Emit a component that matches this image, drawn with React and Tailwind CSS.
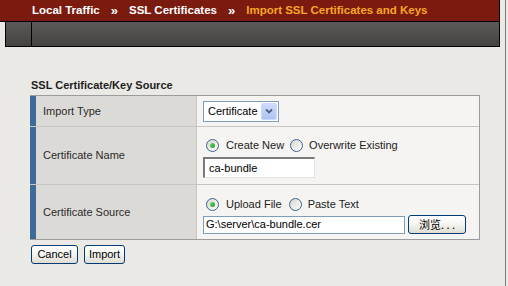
import React from 'react';

const Radio = ({ checked }) => (
  <span className="relative inline-flex h-[13px] w-[13px] shrink-0 items-center justify-center rounded-full border border-[#3d6590] bg-gradient-to-br from-[#d6d6cf] to-white">
    {checked && (
      <span className="h-[5px] w-[5px] rounded-full bg-gradient-to-br from-[#6fd36f] to-[#1f9a1f]" />
    )}
  </span>
);

const XpButton = ({ children, className = '' }) => (
  <button
    className={`flex h-[19px] items-center justify-center rounded-[3px] border border-[#003c74] bg-gradient-to-b from-white via-[#f4f4f0] to-[#dedcd3] text-[11px] leading-none text-black ${className}`}
  >
    {children}
  </button>
);

const rows = [
  { label: 'Import Type', h: 'h-[31px] border-b' },
  { label: 'Certificate Name', h: 'h-[58px] border-b' },
  { label: 'Certificate Source', h: 'h-[54px]' },
];

function TypeSelect() {
  return (
    <div className="flex h-[21px] w-[76px] items-center justify-between border border-[#7f9db9] bg-white pl-[4px] pr-px">
      <span className="text-[11px] text-black">Certificate</span>
      <span className="flex h-[17px] w-[16px] items-center justify-center rounded-[2px] border border-[#c9d8fc] bg-gradient-to-b from-[#cfdcfd] to-[#aec3f3]">
        <svg width="8" height="6" viewBox="0 0 8 6">
          <path d="M1 1.5 L4 4.5 L7 1.5" fill="none" stroke="#4d6185" strokeWidth="1.8" />
        </svg>
      </span>
    </div>
  );
}

function ValueCell({ index }) {
  if (index === 0) {
    return (
      <div className="flex h-full items-center pl-[6px]">
        <TypeSelect />
      </div>
    );
  }
  if (index === 1) {
    return (
      <div className="flex h-full flex-col pl-[6px] pt-[11px]">
        <div className="flex h-[14px] items-center text-[11px] text-[#222]">
          <span className="ml-[3px] flex items-center gap-[7px]">
            <Radio checked />
            Create New
          </span>
          <span className="ml-[6px] flex items-center gap-[6px]">
            <Radio />
            Overwrite Existing
          </span>
        </div>
        <div className="mt-[5px] flex h-[21px] w-[112px] items-center border-t-2 border-l-2 border-r border-b border-t-[#7a7a7a] border-l-[#7a7a7a] border-r-[#e2e2e2] border-b-[#e2e2e2] bg-white pl-[4px] text-[11px] text-black">
          ca-bundle
        </div>
      </div>
    );
  }
  return (
    <div className="flex h-full flex-col pl-[6px] pt-[12px]">
      <div className="flex h-[14px] items-center text-[11px] text-[#222]">
        <span className="ml-[3px] flex items-center gap-[7px]">
          <Radio checked />
          Upload File
        </span>
        <span className="ml-[7px] flex items-center gap-[6px]">
          <Radio />
          Paste Text
        </span>
      </div>
      <div className="mt-[4px] flex items-center gap-[3px]">
        <div className="flex h-[18px] w-[202px] items-center border border-[#7f9db9] bg-white pl-[2px] text-[11px] text-black">
          G:\server\ca-bundle.cer
        </div>
        <XpButton className="h-[18px] w-[58px] font-['Noto_Sans_CJK_SC',sans-serif] text-[#666]">
          浏览. . .
        </XpButton>
      </div>
    </div>
  );
}

export default function App() {
  return (
    <div className="flex h-[286px] w-[508px] overflow-hidden bg-[#ebe9e5] font-['Liberation_Sans',Arial,sans-serif]">
      <div className="flex w-[505px] shrink-0 flex-col">
        <div className="flex h-[22px] w-[500px] items-center gap-[11px] border-r border-b border-black bg-[#7b1b10] pl-[32px] text-[11.5px] font-bold leading-none">
          <span className="text-white">Local Traffic</span>
          <span className="text-[13px] text-white">»</span>
          <span className="text-white">SSL Certificates</span>
          <span className="text-[13px] text-white">»</span>
          <span className="text-[#f6a623]">Import SSL Certificates and Keys</span>
        </div>
        <div className="ml-[5px] flex h-[25px] w-[495px] border-x border-b border-black bg-gradient-to-b from-[#5c5a57] to-[#454341]">
          <div className="h-full w-[26px] border-r border-black" />
        </div>

        <div className="pl-[30px]">
          <div className="mt-[31px] pl-px text-[11px] font-bold leading-[14px] text-[#1e1e1e]">
            SSL Certificate/Key Source
          </div>
          <div className="mt-[3px] w-[450px] border-t border-r border-b border-[#9b9b9b]">
            {rows.map((r, i) => (
              <div key={r.label} className={`flex border-[#c6c4c0] ${r.h}`}>
                <div className="w-[6px] shrink-0 bg-[#3c6a9b]" />
                <div className="flex w-[161px] shrink-0 items-center border-r border-[#c6c4c0] bg-[#dcdad6] pl-[7px] text-[11px] text-[#2a2a2a]">
                  {r.label}
                </div>
                <div className="flex-1 bg-[#f5f4f2]">
                  <ValueCell index={i} />
                </div>
              </div>
            ))}
          </div>
          <div className="mt-[5px] ml-px flex gap-[6px]">
            <XpButton className="w-[47px]">Cancel</XpButton>
            <XpButton className="w-[41px]">Import</XpButton>
          </div>
        </div>
      </div>
      <div className="w-px shrink-0 bg-[#7d7d7d]" />
    </div>
  );
}
